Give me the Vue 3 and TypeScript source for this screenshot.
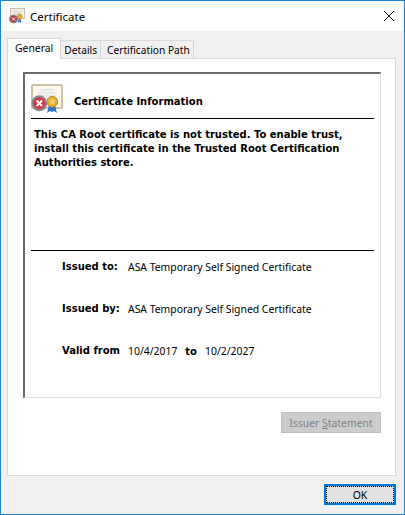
<template>
  <div class="dialog">
    <header class="titlebar">
      <svg class="title-icon" width="16" height="16" viewBox="0 0 16 16">
        <rect x="1.5" y="0.5" width="14" height="10" fill="#f4efe4" stroke="#c9bfae" />
        <path d="M4 3.5h8M5 5.5h6" stroke="#d8d4cc" />
        <path d="M9.500 11l-1 4 2-1 2 1-1-4z" fill="#3b78d8" />
        <circle cx="10.500" cy="8.500" r="2.600" fill="#e5ac2b" stroke="#b98a1c" stroke-width="0.6" />
        <circle cx="4.500" cy="11" r="4" fill="#c23b4a" stroke="#8a8a90" />
        <path d="M3 9.500l3 3M6 9.500l-3 3" stroke="#fff" />
      </svg>
      <span class="title-text">Certificate</span>
      <svg class="close-icon" width="10" height="10" viewBox="0 0 10 10">
        <path d="M0 0l10 10M10 0L0 10" stroke="#111" stroke-width="1" fill="none" />
      </svg>
    </header>

    <main class="content">
      <nav class="tabs">
        <div v-for="tab in tabs" :key="tab" class="tab" :class="{ 'tab--active': tab === 'General' }">{{ tab }}</div>
      </nav>

      <section class="panel">
        <div class="frame">
          <div class="frame-head">
            <svg class="cert-icon" width="32" height="30" viewBox="0 0 32 30">
              <rect x="1" y="1" width="30" height="23" rx="1" fill="#fbf8f0" stroke="#cdbfa8" stroke-width="2" />
              <path d="M9 6h14M7 9h18M7 12h18M10 15h12" stroke="#d9d9d9" />
              <path d="M18 21l-2 8 3-2 2 1 2-1 3 2-2-8z" fill="#2f74d0" />
              <circle cx="21.300" cy="17.700" r="5.300" fill="#e8b135" stroke="#b8861b" />
              <circle cx="21.300" cy="17.700" r="2.600" fill="#f2cb63" />
              <circle cx="8.300" cy="19.300" r="7" fill="#d13a48" stroke="#8a8c92" stroke-width="2" />
              <path d="M5.500 16.500l5.600 5.600M11.100 16.500l-5.600 5.600" stroke="#fff" stroke-width="2" />
            </svg>
            <span class="frame-title">Certificate Information</span>
          </div>
          <div class="message">
            This CA Root certificate is not trusted. To enable trust, install this certificate in the Trusted Root Certification Authorities store.
          </div>
          <div class="details">
            <div class="row">
              <span class="label">Issued to:</span>
              <span class="value">ASA Temporary Self Signed Certificate</span>
            </div>
            <div class="row">
              <span class="label">Issued by:</span>
              <span class="value">ASA Temporary Self Signed Certificate</span>
            </div>
            <div class="row">
              <span class="label">Valid from</span>
              <span class="value value--dates">10/4/2017<b>to</b>10/2/2027</span>
            </div>
          </div>
        </div>
        <div class="panel-actions">
          <button class="btn-issuer" disabled>Issuer <u>S</u>tatement</button>
        </div>
      </section>

      <footer class="footer">
        <button class="btn-ok"><span>OK</span></button>
      </footer>
    </main>
  </div>
</template>

<script setup lang="ts">
const tabs: string[] = ['General', 'Details', 'Certification Path']
</script>

<style>
html,
body {
  margin: 0;
  overflow: hidden;
}
</style>

<style scoped>
.dialog {
  width: 405px;
  height: 515px;
  box-sizing: border-box;
  border: 1px solid #1883d7;
  display: flex;
  flex-direction: column;
  font-family: "Noto Sans", "Open Sans", sans-serif;
  font-size: 10.4px;
  color: #000;
  background: #f0f0f0;
}

.titlebar {
  height: 30px;
  flex-shrink: 0;
  background: #fff;
  display: flex;
  align-items: center;
  padding: 0 10px 0 8px;
  gap: 5px;
}

.title-text {
  font-size: 11.5px;
  flex: 1;
}

.content {
  flex: 1;
  padding: 7px 8px 8px 6px;
  display: flex;
  flex-direction: column;
}

.tabs {
  display: flex;
  height: 20px;
  align-items: flex-end;
  position: relative;
  z-index: 1;
}

.tab {
  height: 18px;
  box-sizing: border-box;
  border: 1px solid #d9d9d9;
  border-bottom: none;
  margin-left: -1px;
  padding: 0 3px;
  font-size: 10.2px;
  line-height: 19px;
  background: #f0f0f0;
}

.tab:first-child {
  margin-left: 0;
}

.tab:last-child {
  padding: 0 3px 0 6px;
}

.tab--active {
  height: 21px;
  margin-bottom: -1px;
  background: #fff;
  padding: 0 7px;
  font-size: 10.4px;
  line-height: 19px;
}

.panel {
  height: 418px;
  box-sizing: border-box;
  background: #fff;
  border: 1px solid #d9d9d9;
  padding: 13px 14px 0 15px;
}

.frame {
  height: 326px;
  box-sizing: border-box;
  border: 1px solid #e0e0e0;
  border-top: 2px solid #696969;
  border-left: 2px solid #696969;
  padding: 0 6px 0 6px;
  display: flex;
  flex-direction: column;
}

.frame-head {
  height: 45px;
  flex-shrink: 0;
  box-sizing: border-box;
  border-bottom: 1px solid #000;
  display: flex;
  align-items: center;
  gap: 11px;
  padding: 10px 0 0 0;
}

.cert-icon {
  flex-shrink: 0;
  align-self: flex-start;
}

.frame-title {
  font-family: "DejaVu Sans", sans-serif;
  font-size: 10px;
  font-weight: 700;
}

.message {
  height: 132px;
  flex-shrink: 0;
  box-sizing: border-box;
  border-bottom: 1px solid #000;
  padding: 9px 0 0 3px;
  font-family: "DejaVu Sans", sans-serif;
  font-size: 10px;
  font-weight: 700;
  line-height: 14px;
}

.details {
  padding-top: 9px;
  display: flex;
  flex-direction: column;
  gap: 28px;
}

.row {
  display: flex;
  height: 14px;
  line-height: 14px;
}

.label {
  width: 97px;
  padding-left: 31px;
  box-sizing: border-box;
  font-family: "DejaVu Sans", sans-serif;
  font-size: 10px;
  font-weight: 700;
  white-space: nowrap;
}

.value b {
  margin: 0 8px;
  font-family: "DejaVu Sans", sans-serif;
  font-size: 10px;
}

.panel-actions {
  display: flex;
  justify-content: flex-end;
  padding-top: 14px;
}

.btn-issuer {
  width: 100px;
  height: 21px;
  padding: 0;
  font: inherit;
  color: #838383;
  background: #cccccc;
  border: 1px solid #bfbfbf;
}

.footer {
  display: flex;
  justify-content: flex-end;
  padding-top: 8px;
}

.btn-ok {
  width: 72px;
  height: 21px;
  padding: 0;
  font: inherit;
  color: #000;
  background: #e1e1e1;
  border: 2px solid #0078d7;
  outline: 1px dotted #000;
  outline-offset: -3px;
}
</style>
